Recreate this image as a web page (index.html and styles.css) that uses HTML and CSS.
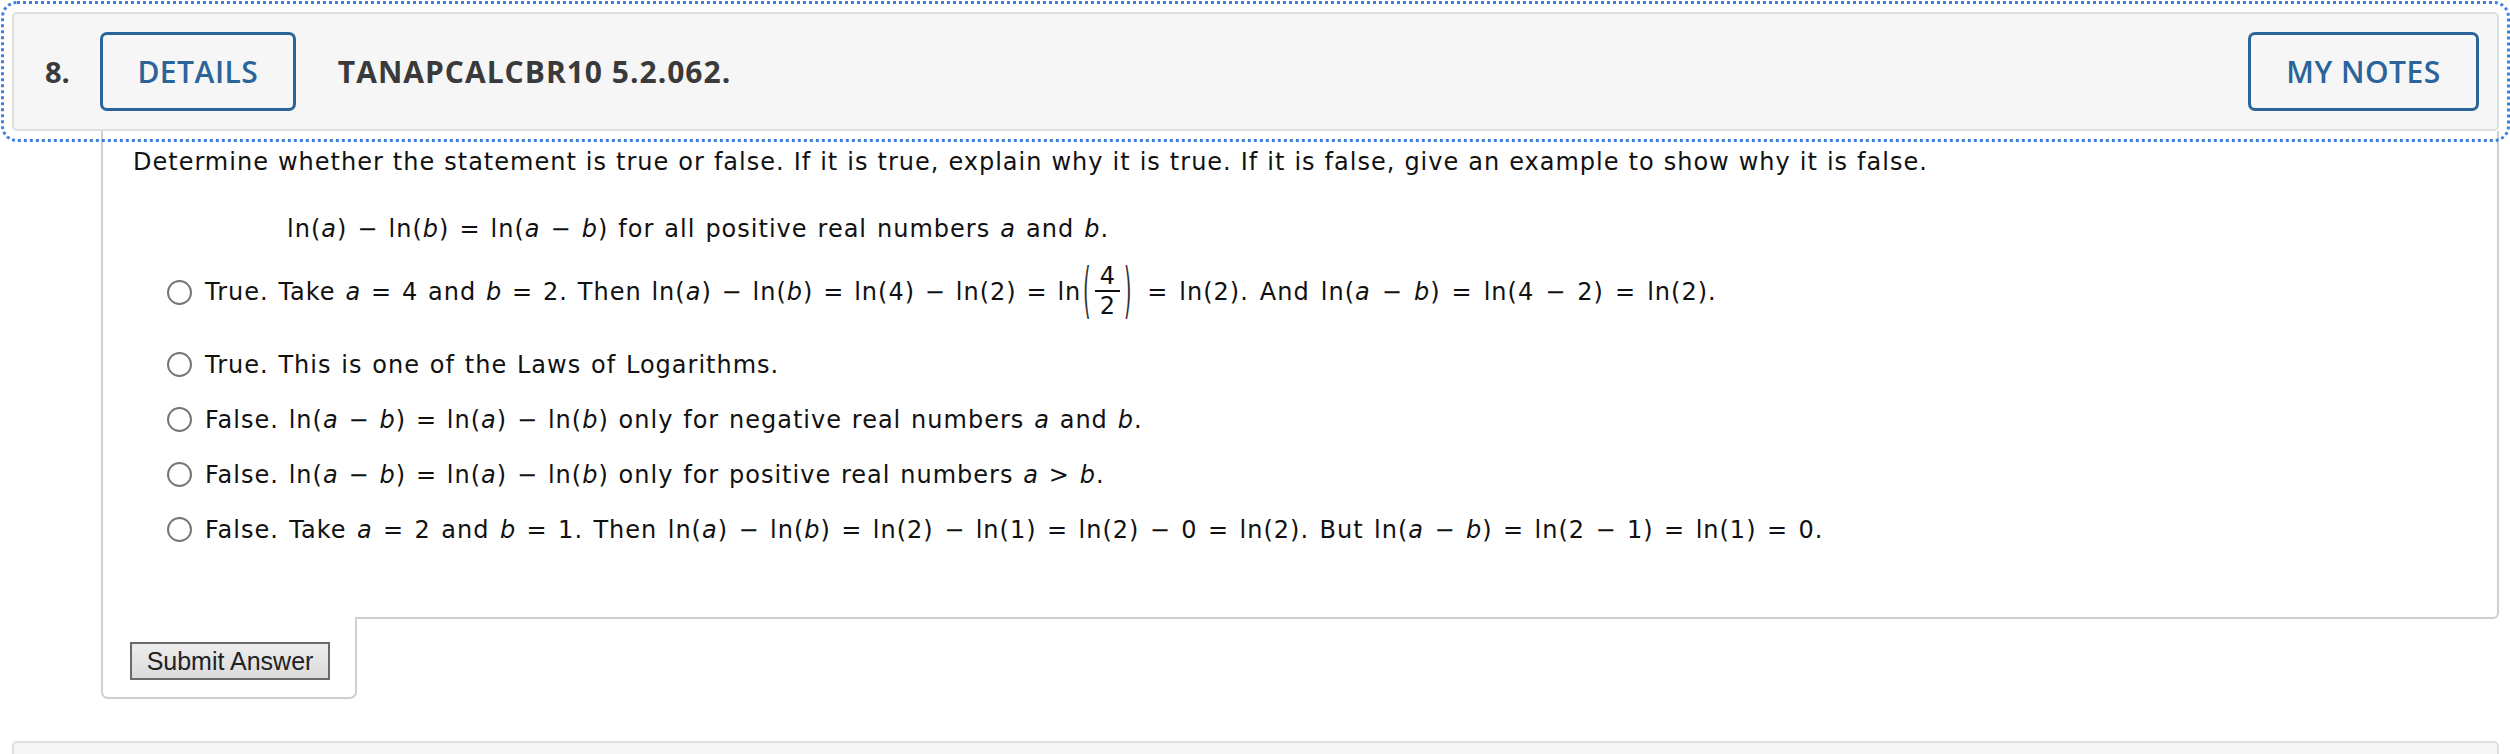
FILE: index.html
```html
<!DOCTYPE html>
<html lang="en">
<head>
<meta charset="utf-8">
<title>Question 8</title>
<link rel="stylesheet" href="styles.css">
</head>
<body>
<div class="page">
  <div class="qhead">
    <span class="qnum">8.</span>
    <button class="hbtn details">DETAILS</button>
    <span class="qtitle">TANAPCALCBR10 5.2.062.</span>
    <button class="hbtn notes">MY NOTES</button>
  </div>
  <div class="qbody">
    <p class="prompt">Determine whether the statement is true or false. If it is true, explain why it is true. If it is false, give an example to show why it is false.</p>
    <p class="statement">ln(<i>a</i>) − ln(<i>b</i>) = ln(<i>a</i> − <i>b</i>) for all positive real numbers <i>a</i> and <i>b</i>.</p>
    <div class="options">
      <label class="opt opt-tall"><input type="radio" name="q8"><span class="otext">True. Take <i>a</i> = 4 and <i>b</i> = 2. Then ln(<i>a</i>) − ln(<i>b</i>) = ln(4) − ln(2) = ln<span class="fwrap"><span class="paren">(</span><span class="frac"><span class="num">4</span><span class="den">2</span></span><span class="paren">)</span></span> <span class="after">= ln(2). And ln(<i>a</i> − <i>b</i>) = ln(4 − 2) = ln(2).</span></span></label>
      <label class="opt"><input type="radio" name="q8"><span class="otext">True. This is one of the Laws of Logarithms.</span></label>
      <label class="opt"><input type="radio" name="q8"><span class="otext">False. ln(<i>a</i> − <i>b</i>) = ln(<i>a</i>) − ln(<i>b</i>) only for negative real numbers <i>a</i> and <i>b</i>.</span></label>
      <label class="opt"><input type="radio" name="q8"><span class="otext">False. ln(<i>a</i> − <i>b</i>) = ln(<i>a</i>) − ln(<i>b</i>) only for positive real numbers <i>a</i> &gt; <i>b</i>.</span></label>
      <label class="opt"><input type="radio" name="q8"><span class="otext wide">False. Take <i>a</i> = 2 and <i>b</i> = 1. Then ln(<i>a</i>) − ln(<i>b</i>) = ln(2) − ln(1) = ln(2) − 0 = ln(2). But ln(<i>a</i> − <i>b</i>) = ln(2 − 1) = ln(1) = 0.</span></label>
    </div>
  </div>
  <div class="submit-tab">
    <button class="submit">Submit Answer</button>
  </div>
  <div class="next-head"></div>
</div>
</body>
</html>
```
FILE: styles.css
```css
html, body {
  margin: 0;
  padding: 0;
  background: #ffffff;
}

.page {
  padding-top: 12px;
  font-family: "DejaVu Sans", Verdana, sans-serif;
  color: #111111;
}

.qhead {
  box-sizing: border-box;
  height: 119px;
  margin: 0 11px 0 12px;
  background: #f6f6f6;
  border: 2px solid #dedede;
  border-radius: 5px;
  outline: 3px dotted #3f7fe3;
  outline-offset: 8px;
  display: flex;
  align-items: center;
  padding: 0 18px 0 31px;
  font-family: "Open Sans", sans-serif;
}

.qnum {
  font-size: 29px;
  font-weight: 700;
  color: #3a3a3a;
}

.hbtn {
  box-sizing: border-box;
  height: 79px;
  background: #f6f6f6;
  border: 3px solid #2b6499;
  border-radius: 7px;
  color: #2b6499;
  font-family: "Open Sans", sans-serif;
  font-size: 30px;
  font-weight: 600;
  letter-spacing: 0.5px;
  padding: 0;
}

.details {
  width: 196px;
  margin-left: 30px;
}

.notes {
  width: 231px;
  margin-left: auto;
}

.qtitle {
  margin-left: 42px;
  font-size: 30px;
  font-weight: 700;
  letter-spacing: 1px;
  color: #3a3a3a;
}

.qbody {
  margin: 0 11px 0 101px;
  border: 2px solid #cfcfcf;
  border-top: none;
  border-bottom-right-radius: 6px;
  padding: 13px 0 60px 0;
  font-size: 24px;
  letter-spacing: 1px;
}

.prompt {
  margin: 0;
  padding-left: 30px;
  line-height: 36px;
  word-spacing: 0.4px;
}

.statement {
  margin: 31px 0 0 0;
  padding-left: 184px;
  line-height: 36px;
  letter-spacing: 1px;
  word-spacing: 1.4px;
}

.options {
  margin-top: 1px;
  padding-left: 64px;
}

.opt {
  display: flex;
  align-items: center;
  height: 55px;
  line-height: 36px;
  word-spacing: 1.2px;
}

.opt-tall {
  height: 89px;
}

.opt input {
  appearance: none;
  -webkit-appearance: none;
  box-sizing: border-box;
  width: 25px;
  height: 25px;
  margin: 0 13px 0 0;
  border: 2px solid #767676;
  border-radius: 50%;
  background: #ffffff;
  flex: none;
}

.otext {
  white-space: nowrap;
}

.wide {
  word-spacing: 1.8px;
}

.after {
  word-spacing: 2.4px;
}

.fwrap {
  display: inline-flex;
  align-items: center;
  vertical-align: middle;
  margin: -4px 4px 0 0;
  letter-spacing: 0;
}

.paren {
  display: inline-block;
  transform: scale(0.8, 2.5);
  line-height: 26px;
  color: #333333;
  margin: 0 1px;
}

.frac {
  display: inline-flex;
  flex-direction: column;
  align-items: center;
  margin: 0 2px;
}

.num {
  line-height: 28px;
  padding: 0 5px;
  border-bottom: 2px solid #111111;
}

.den {
  line-height: 28px;
}

.submit-tab {
  box-sizing: border-box;
  width: 256px;
  margin: -2px 0 0 101px;
  background: #ffffff;
  border: 2px solid #cfcfcf;
  border-top: none;
  border-radius: 0 0 7px 7px;
  padding: 25px 0 17px 27px;
  position: relative;
}

.submit {
  box-sizing: border-box;
  width: 200px;
  height: 38px;
  border: 2px solid #6a6a6a;
  background: linear-gradient(#eeeeee, #dadada);
  font-family: "Liberation Sans", Arial, sans-serif;
  font-size: 25px;
  color: #222222;
  padding: 0;
  display: block;
}

.next-head {
  box-sizing: border-box;
  height: 60px;
  margin: 42px 11px 0 12px;
  background: #f6f6f6;
  border: 2px solid #dedede;
  border-radius: 5px;
}
```
